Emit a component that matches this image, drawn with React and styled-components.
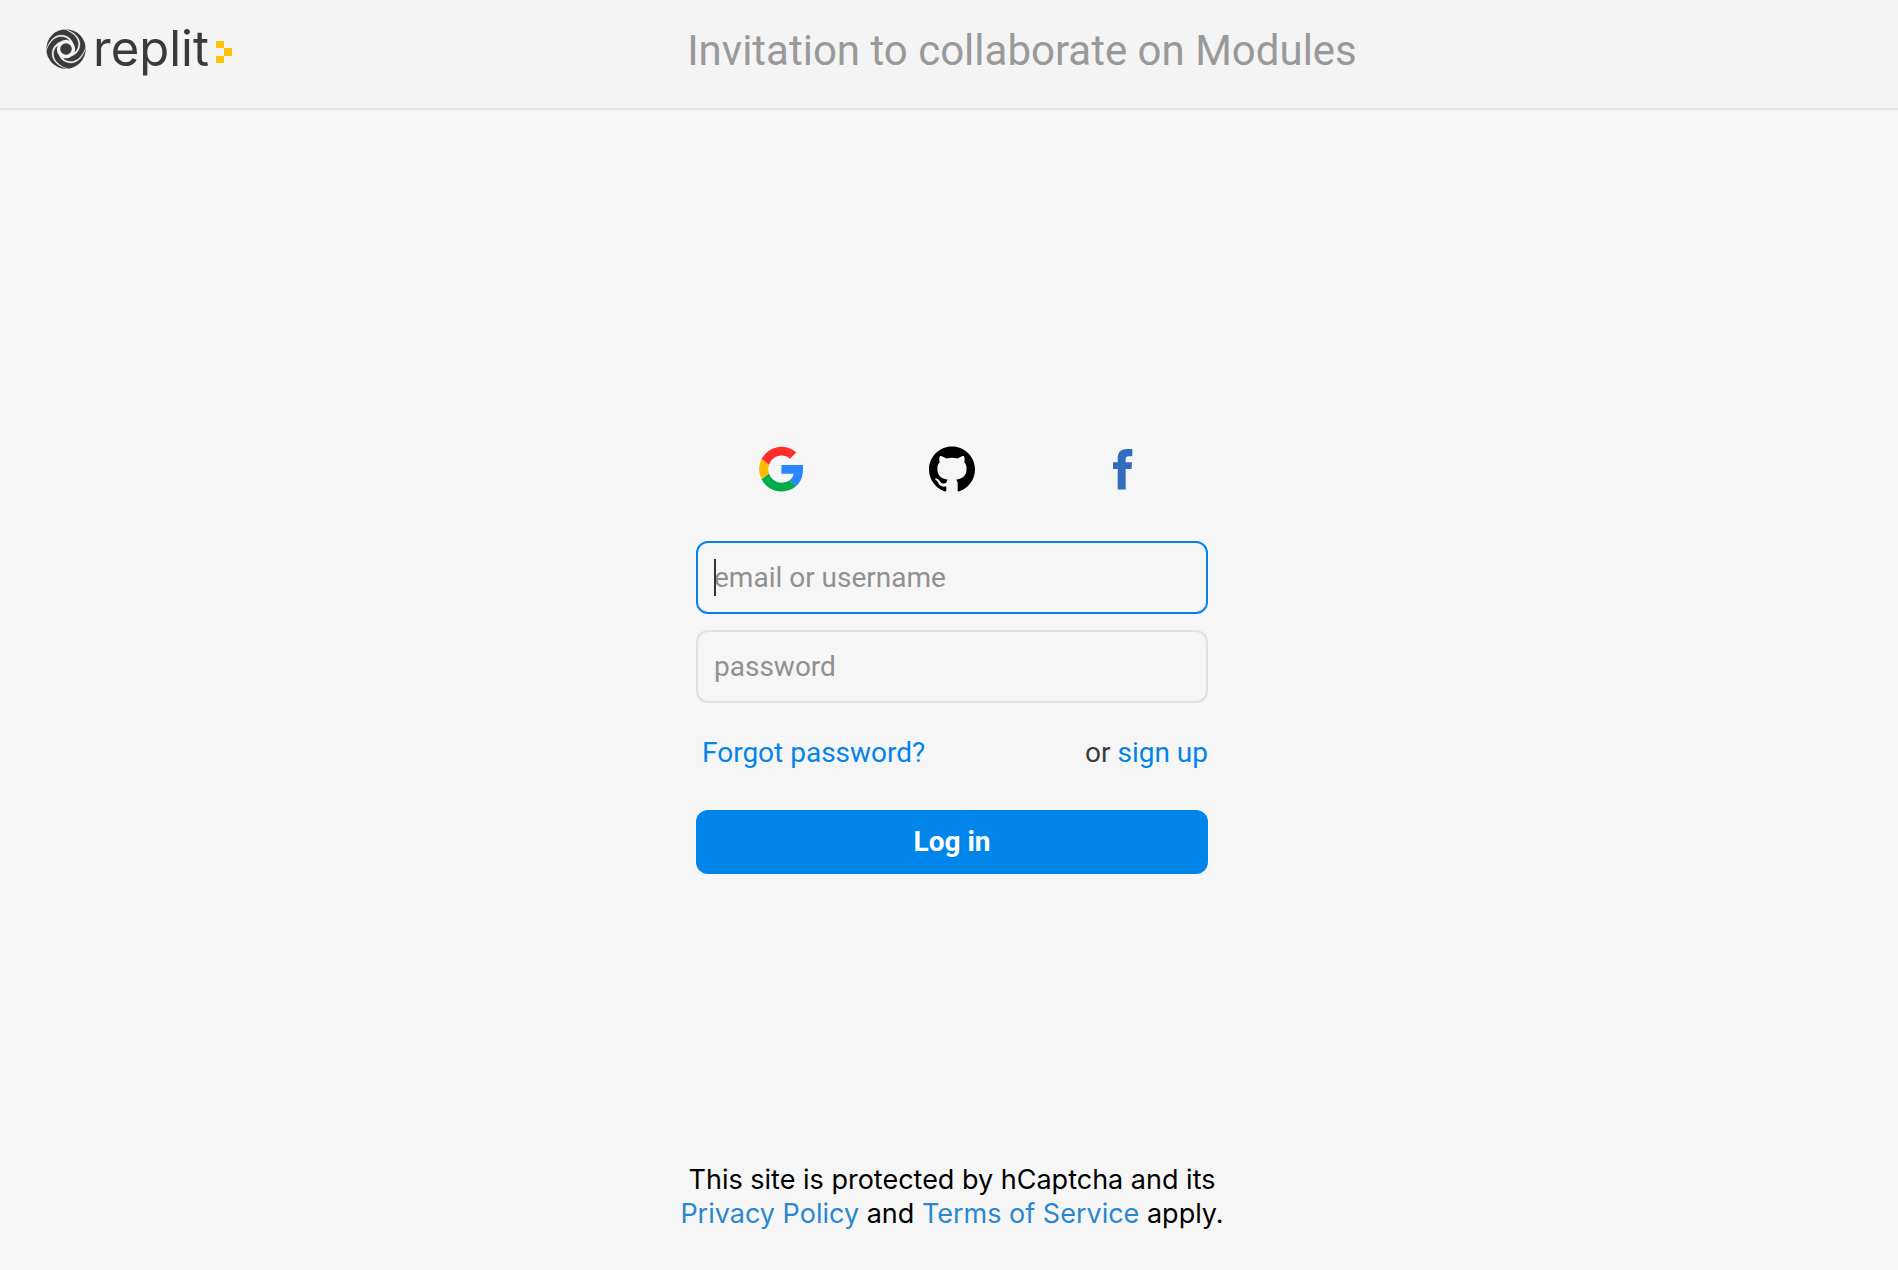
import React, { useState } from "react";
import styled, { createGlobalStyle } from "styled-components";

const GlobalStyle = createGlobalStyle`
  *, *::before, *::after { box-sizing: border-box; }
  body { margin: 0; background: #f6f6f6; color: #3c3c3c; font-family: Roboto, "Noto Sans", sans-serif; font-size: 28px; line-height: 36px; }
`;
const Page = styled.div`
  min-height: 100vh;
  display: flex;
  flex-direction: column;
`;
const Header = styled.header`
  display: flex;
  align-items: center;
  padding: 0 86px 10px 46px;
  height: 110px;
  background: #f4f4f4;
  border-bottom: 2px solid #e3e3e3;
`;
const Brand = styled.a`
  display: flex;
  align-items: center;
  gap: 7px;
  width: 186px;
  color: #3a3a3a;
  text-decoration: none;
`;
const Wordmark = styled.span`
  flex: 1;
  font-family: Inter, sans-serif;
  font-size: 49px;
  font-weight: 400;
  line-height: 48px;
`;
const Title = styled.h1`
  flex: 1;
  margin: 0;
  padding-top: 4px;
  color: #999;
  font-size: 42px;
  font-weight: 400;
  line-height: 48px;
  text-align: center;
`;
const Main = styled.main`
  flex: 1;
  display: flex;
  flex-direction: column;
  align-items: center;
  padding: 329px 0 39px 6px;
`;
const Form = styled.form`
  display: flex;
  flex-direction: column;
  width: 100%;
  max-width: 512px;
`;
const Providers = styled.div`
  display: grid;
  grid-template-columns: repeat(3, 1fr);
  margin-bottom: 42px;
`;
const ProviderButton = styled.button`
  display: flex;
  align-items: center;
  justify-content: center;
  height: 60px;
  padding: 0;
  border: 0;
  background: none;
`;
const Field = styled.label`
  position: relative;
  display: block;
  margin-bottom: 16px;
`;
const Input = styled.input`
  display: block;
  width: 100%;
  height: 73px;
  padding: 0 16px;
  border: 2px solid #e0e0e0;
  border-radius: 12px;
  outline: none;
  background: transparent;
  color: #3c3c3c;
  caret-color: transparent;
  font: inherit;
  &::placeholder { color: #909090; opacity: 1; }
  &:focus { border-color: #0484ea; }
`;
const Caret = styled.span`
  position: absolute;
  left: 18px;
  top: 18px;
  width: 2px;
  height: 37px;
  background: #333;
`;
const LinkRow = styled.div`
  display: flex;
  justify-content: space-between;
  padding: 16px 0 39px 6px;
`;
const Link = styled.a`
  color: ${(p) => (p.$muted ? "#2a86cf" : "#0484ea")};
  text-decoration: none;
`;
const Submit = styled.button`
  height: 64px;
  border: 0;
  border-radius: 12px;
  background: #0185eb;
  color: #fff;
  font: inherit;
  font-weight: 700;
`;
const Legal = styled.p`
  margin: auto 0 0;
  color: #000;
  font-family: Inter, sans-serif;
  font-size: 27px;
  line-height: 34px;
  text-align: center;
`;

const blades = [0, 90, 180, 270];
const Swirl = () => (
  <svg width="40" height="40" viewBox="-20 -20 40 40" aria-hidden="true">
    <circle r="19.7" fill="#3a3a3a" />
    <circle r="7.5" fill="none" stroke="#f4f4f4" strokeWidth="3.4" />
    {blades.map((a) => (
      <path key={a} transform={`rotate(${a})`} d="M0 8C9 8 14 2 14-5C14-12 7-18-2-20C6-17 12.500-12 12.500-5C12.500 1 8 6 0 7z" fill="#f4f4f4" stroke="#f4f4f4" strokeWidth=".3" />
    ))}
  </svg>
);
const Prompt = () => (
  <svg width="16" height="30" viewBox="0 -7 16 30" fill="#ffc20a" aria-hidden="true">
    <path d="M0 0h8v7H0zM8 7h8v8H8zM0 15h8v7H0z" />
  </svg>
);
const Google = () => (
  <svg width="44" height="46" viewBox="0 0 44 45" aria-hidden="true">
    <path fill="#2a85ff" d="M44 18.5H22.4v8.7h12.3c-.6 3-2.300 5.300-4.500 6.800l7.100 5.600C41.600 35.700 44 30 44 23z" />
    <path fill="#00ac47" d="M22.400 45c6 0 11-2 14.900-5.400L30.200 34c-2 1.400-4.600 2.200-7.800 2.200-5.800 0-10.600-3.800-12.400-9.100l-7.400 5.600C6.300 40 13.700 45 22.400 45z" />
    <path fill="#ffba00" d="M10 27.100a14 14 0 0 1 0-8.900l-7.400-5.700a22.400 22.400 0 0 0 0 20.200z" />
    <path fill="#ff2c29" d="M22.400 8.900c3.300 0 6.200 1.100 8.500 3.300l6.400-6.300A22.400 22.400 0 0 0 2.600 12.500L10 18.200c1.800-5.300 6.600-9.300 12.400-9.300z" />
  </svg>
);
const Github = () => (
  <svg width="46" height="46" viewBox="0 0 24 24" aria-hidden="true">
    <path d="M12 .297c-6.630 0-12 5.373-12 12 0 5.303 3.438 9.800 8.205 11.385.6.113.82-.258.82-.577 0-.285-.01-1.040-.015-2.040-3.338.724-4.042-1.610-4.042-1.610C4.422 18.070 3.633 17.700 3.633 17.700c-1.087-.744.084-.729.084-.729 1.205.084 1.838 1.236 1.838 1.236 1.070 1.835 2.809 1.305 3.495.998.108-.776.417-1.305.76-1.605-2.665-.3-5.466-1.332-5.466-5.930 0-1.310.465-2.380 1.235-3.220-.135-.303-.54-1.523.105-3.176 0 0 1.005-.322 3.300 1.230.96-.267 1.980-.399 3-.405 1.020.006 2.040.138 3 .405 2.280-1.552 3.285-1.230 3.285-1.230.645 1.653.24 2.873.12 3.176.765.840 1.230 1.910 1.230 3.220 0 4.610-2.805 5.625-5.475 5.920.42.360.81 1.096.81 2.220 0 1.606-.015 2.896-.015 3.286 0 .315.210.69.825.57C20.565 22.092 24 17.592 24 12.297c0-6.627-5.373-12-12-12" />
  </svg>
);
const Facebook = () => (
  <svg width="20" height="41" viewBox="0 0 20 41" aria-hidden="true">
    <path fill="#326dbd" d="M4.700 40.500V20H0v-6.700h4.700V9.500C4.700 3.500 7.500 0 13.500 0h5.800v7.300h-3.600c-2.500 0-3 1-3 3.200v2.800h6.300L18.500 20h-5.800v20.500z" />
  </svg>
);

export default function App() {
  const [name, setName] = useState("");
  const [focused, setFocused] = useState(true);
  return (
    <Page>
      <GlobalStyle />
      <Header>
        <Brand href="#" aria-label="replit home">
          <Swirl />
          <Wordmark>replit</Wordmark>
          <Prompt />
        </Brand>
        <Title>Invitation to collaborate on Modules</Title>
      </Header>
      <Main>
        <Form onSubmit={(e) => e.preventDefault()}>
          <Providers>
            <ProviderButton type="button" aria-label="Continue with Google"><Google /></ProviderButton>
            <ProviderButton type="button" aria-label="Continue with GitHub"><Github /></ProviderButton>
            <ProviderButton type="button" aria-label="Continue with Facebook"><Facebook /></ProviderButton>
          </Providers>
          <Field>
            <Input
              autoFocus
              aria-label="email or username"
              placeholder="email or username"
              value={name}
              onChange={(e) => setName(e.target.value)}
              onFocus={() => setFocused(true)}
              onBlur={() => setFocused(false)}
            />
            {focused && !name && <Caret />}
          </Field>
          <Field>
            <Input type="password" aria-label="password" placeholder="password" />
          </Field>
          <LinkRow>
            <Link href="#">Forgot password?</Link>
            <span>or <Link href="#">sign up</Link></span>
          </LinkRow>
          <Submit type="submit">Log in</Submit>
        </Form>
        <Legal>
          This site is protected by hCaptcha and its<br />
          <Link $muted href="#">Privacy Policy</Link> and <Link $muted href="#">Terms of Service</Link> apply.
        </Legal>
      </Main>
    </Page>
  );
}
